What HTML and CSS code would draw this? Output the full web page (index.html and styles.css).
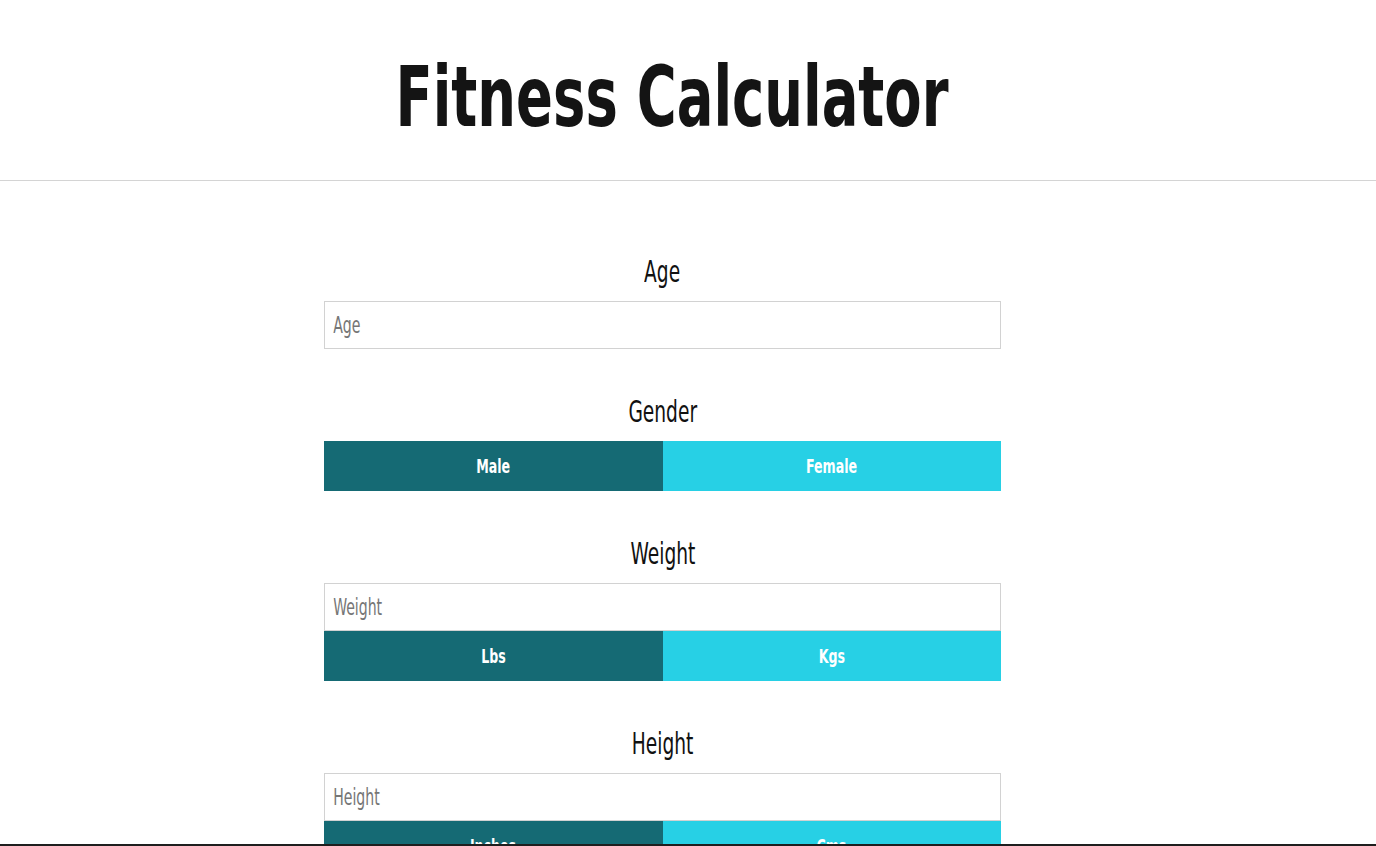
FILE: index.html
```html
<!DOCTYPE html>
<html lang="en">
<head>
<meta charset="utf-8">
<title>Fitness Calculator</title>
<link rel="stylesheet" href="styles.css">
</head>
<body>
<header class="site-header">
  <h1 class="title"><span class="narrow">Fitness Calculator</span></h1>
</header>
<main class="calc">
  <section class="field">
    <h2 class="field-label"><span class="narrow">Age</span></h2>
    <div class="input-box"><input class="text-input" type="text" placeholder="Age"></div>
  </section>
  <section class="field">
    <h2 class="field-label"><span class="narrow">Gender</span></h2>
    <div class="toggle">
      <button class="toggle-btn active" type="button"><span class="narrow">Male</span></button>
      <button class="toggle-btn" type="button"><span class="narrow">Female</span></button>
    </div>
  </section>
  <section class="field">
    <h2 class="field-label"><span class="narrow">Weight</span></h2>
    <div class="input-box"><input class="text-input" type="text" placeholder="Weight"></div>
    <div class="toggle">
      <button class="toggle-btn active" type="button"><span class="narrow">Lbs</span></button>
      <button class="toggle-btn" type="button"><span class="narrow">Kgs</span></button>
    </div>
  </section>
  <section class="field">
    <h2 class="field-label"><span class="narrow">Height</span></h2>
    <div class="input-box"><input class="text-input" type="text" placeholder="Height"></div>
    <div class="toggle">
      <button class="toggle-btn active" type="button"><span class="narrow">Inches</span></button>
      <button class="toggle-btn" type="button"><span class="narrow">Cms</span></button>
    </div>
  </section>
</main>
<div class="bottom-rule"></div>
</body>
</html>
```

FILE: styles.css
```css
* {
  box-sizing: border-box;
}

html, body {
  margin: 0;
  padding: 0;
  background: #ffffff;
}

body {
  font-family: "DejaVu Sans Condensed", "DejaVu Sans", sans-serif;
  font-stretch: condensed;
  color: #111111;
}

.narrow {
  display: inline-block;
  white-space: nowrap;
  transform-origin: center center;
}

.site-header {
  height: 181px;
  display: flex;
  justify-content: center;
  padding-top: 55px;
  padding-right: 31px;
  border-bottom: 1px solid #d4d4d4;
}

.title {
  margin: 0;
  font-size: 84px;
  line-height: 1;
  font-weight: 700;
  color: #141414;
}

.title .narrow {
  transform: scaleX(0.72);
}

.calc {
  width: 677px;
  margin-left: 324px;
  padding-top: 73px;
  padding-bottom: 60px;
  display: flex;
  flex-direction: column;
  gap: 45px;
}

.field {
  display: flex;
  flex-direction: column;
}

.field-label {
  margin: 0 0 11px;
  text-align: center;
  font-size: 30px;
  line-height: 36px;
  font-weight: 400;
  color: #111111;
}

.field-label .narrow {
  transform: scaleX(0.69);
}

.input-box {
  height: 48px;
  border: 1px solid #d2d2d2;
  overflow: hidden;
  background: #ffffff;
}

.text-input {
  display: block;
  width: 148%;
  height: 46px;
  margin: 0;
  padding: 0 0 0 12px;
  border: none;
  border-radius: 0;
  font-family: inherit;
  font-stretch: condensed;
  font-size: 23px;
  color: #333333;
  background: transparent;
  outline: none;
  transform: scaleX(0.68);
  transform-origin: left center;
}

.text-input::placeholder {
  color: #767676;
}

.toggle {
  display: flex;
  height: 50px;
}

.toggle-btn {
  flex: 1 1 0;
  margin: 0;
  padding: 0;
  border: none;
  border-radius: 0;
  background: #27d0e5;
  color: #ffffff;
  font-family: inherit;
  font-stretch: condensed;
  font-size: 20px;
  font-weight: 700;
  cursor: pointer;
}

.toggle-btn .narrow {
  transform: scaleX(0.7);
}

.toggle-btn.active {
  background: #156a74;
}

.bottom-rule {
  position: fixed;
  left: 0;
  right: 0;
  bottom: 0;
  height: 2px;
  background: #1e1e1e;
}
```
